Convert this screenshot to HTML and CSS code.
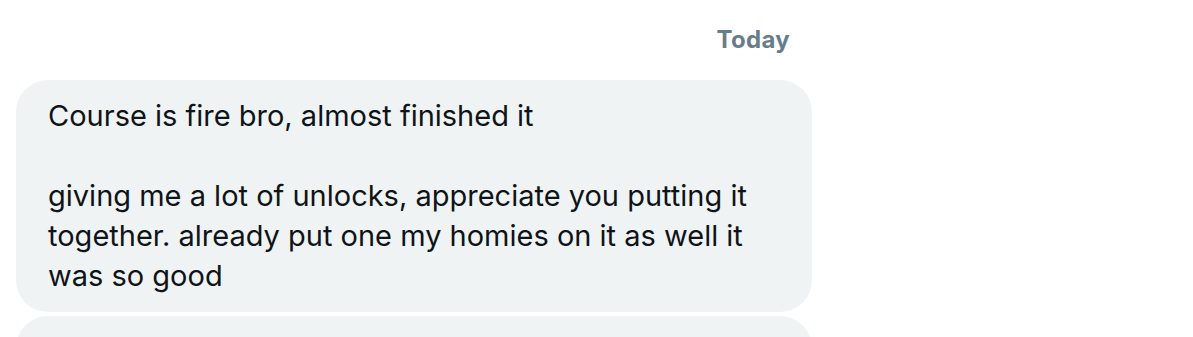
FILE: index.html
```html
<!DOCTYPE html>
<html lang="en">
<head>
    <meta charset="UTF-8">
    <meta name="viewport" content="width=device-width, initial-scale=1.0">
    <title>Messages</title>
    <link rel="stylesheet" href="styles.css">
</head>
<body>
    <div class="thread">
        <div class="day-label">Today</div>
        <div class="bubble">
            <p>Course is fire bro, almost finished it</p>
            <p>giving me a lot of unlocks, appreciate you putting it together. already put one my homies on it as well it was so good</p>
        </div>
        <div class="bubble bubble-next"></div>
    </div>
</body>
</html>
```

FILE: styles.css
```css
body {
    font-family: 'Inter', 'Roboto', sans-serif;
    background-color: #fff;
    color: #0f1419;
    margin: 0;
    padding: 0;
    overflow: hidden;
}
.thread {
    width: 796px;
    margin-left: 16px;
    display: flex;
    flex-direction: column;
    gap: 4px;
}
.day-label {
    text-align: right;
    padding: 24px 22px 20px 0;
    font-size: 24px;
    font-weight: 700;
    line-height: 32px;
    letter-spacing: 0.3px;
    color: #687d8c;
}
.bubble {
    background-color: #eff3f4;
    border-radius: 32px;
    padding: 16px 32px;
    font-size: 29px;
    line-height: 40px;
}
.bubble p {
    margin: 0 0 40px;
}
.bubble p:last-child {
    margin-bottom: 0;
}
.bubble-next {
    height: 80px;
}
```
